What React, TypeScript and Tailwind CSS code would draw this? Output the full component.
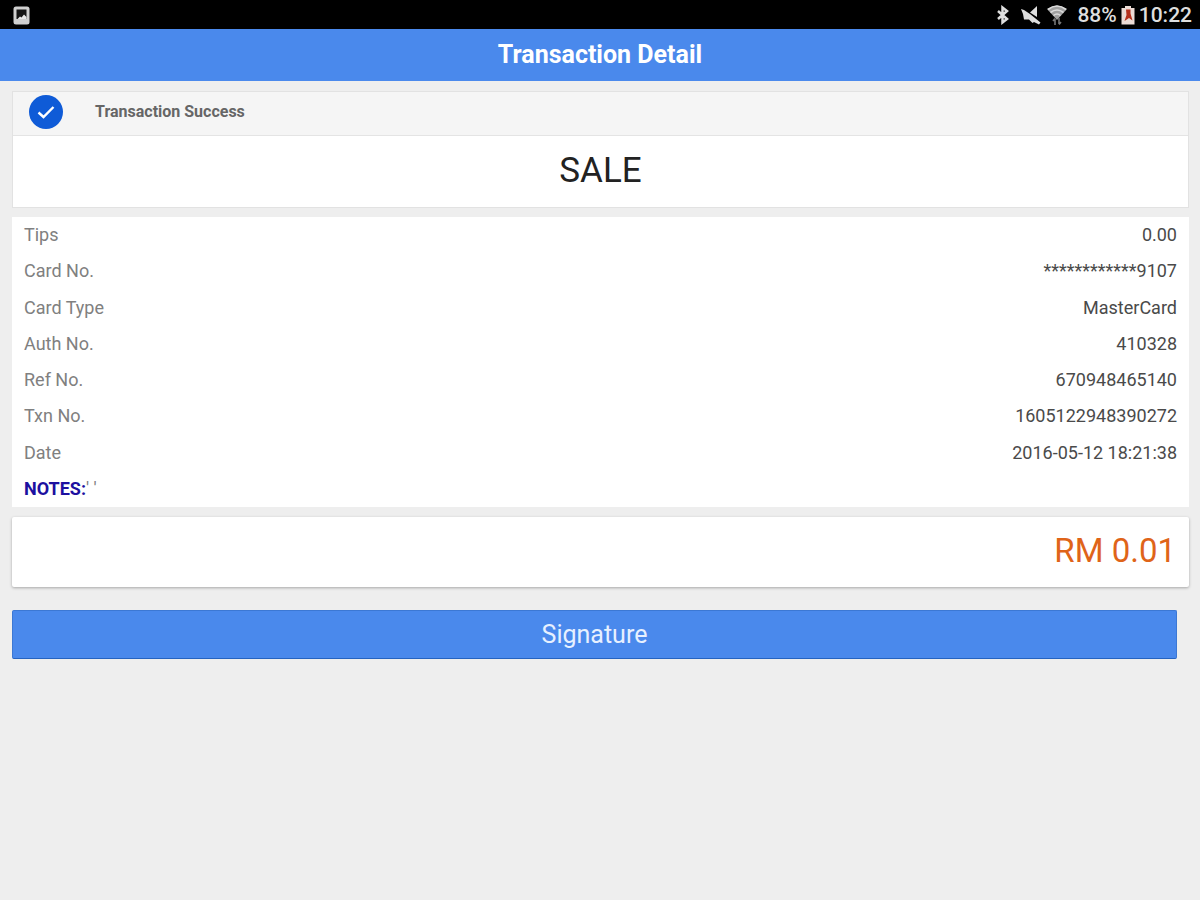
import React from "react";

const details = [
  { label: "Tips", value: "0.00" },
  { label: "Card No.", value: "************9107" },
  { label: "Card Type", value: "MasterCard" },
  { label: "Auth No.", value: "410328" },
  { label: "Ref No.", value: "670948465140" },
  { label: "Txn No.", value: "1605122948390272" },
  { label: "Date", value: "2016-05-12 18:21:38" },
];

const PictureIcon = () => (
  <svg className="w-[18px] h-5" viewBox="0 0 18 20" aria-hidden="true">
    <rect x="0.500" y="1.500" width="16" height="18" rx="2.500" fill="#cfcfcf" />
    <rect x="3.500" y="4.500" width="10" height="9.500" fill="#141414" />
    <path d="M4.500 14l2.500-2.500 1.500 1L11 9.500l2.500 2.500v2z" fill="#e8e8e8" />
  </svg>
);

const BluetoothIcon = () => (
  <svg className="w-4 h-5" viewBox="0 0 16 20" aria-hidden="true">
    <path
      d="M1 6l9 8-4.500 3.500v-15L10 6l-9 8"
      fill="none"
      stroke="#dedede"
      strokeWidth="2.500"
    />
  </svg>
);

const MuteIcon = () => (
  <svg className="w-5 h-5" viewBox="0 0 20 20" aria-hidden="true">
    <path d="M0 4l3 1 6 4 10.500 8.500-1.500 2-5-2.500-1.500 1L8 14.500H3L2 9z" fill="#dedede" />
    <path d="M9 7.500l7-6.500v11z" fill="#dedede" />
  </svg>
);

const WifiIcon = () => (
  <svg className="w-5 h-6" viewBox="0 0 20 24" aria-hidden="true">
    <path d="M0 6Q10-1 20 6L10 17z" fill="#a0a0a0" />
    <path
      d="M1 6.500Q10-.5 19 6.500M3.500 9.500q6.500-5 13 0M6.500 12.500q3.500-3 7 0"
      fill="none"
      stroke="#dadada"
      strokeWidth="1.600"
    />
    <path
      d="M8 22v-6M6 18l2-2.500M12 15v6M14 19l-2 2.500"
      fill="none"
      stroke="#777"
      strokeWidth="1.600"
    />
  </svg>
);

const BatteryIcon = () => (
  <svg className="w-4 h-5" viewBox="0 0 16 20" aria-hidden="true">
    <path d="M5 1h6v2h3.500v16.500h-13V3H5z" fill="#ecdcd6" />
    <path d="M6 4.500h4.500v4l2 7-3.500-2.500-4.500 3 2-6z" fill="#b5301c" />
  </svg>
);

const CheckIcon = () => (
  <svg className="w-[34px] h-[34px]" viewBox="0 0 34 34" aria-hidden="true">
    <circle cx="17" cy="17" r="17" fill="#0f5bd7" />
    <path
      d="M9.500 17.500l5 4.500 10-10"
      fill="none"
      stroke="#fff"
      strokeWidth="2.400"
    />
  </svg>
);

const StatusBar = () => (
  <div className="flex items-center justify-between h-[29px] pl-[13px] pr-2 bg-black text-[#dedede]">
    <PictureIcon />
    <div className="flex items-center text-[21px] leading-6 font-medium">
      <BluetoothIcon />
      <span className="flex ml-2 mr-[6px]">
        <MuteIcon />
      </span>
      <WifiIcon />
      <span className="ml-[10px] mr-[3px]">88%</span>
      <BatteryIcon />
      <span className="ml-[3px]">10:22</span>
    </div>
  </div>
);

const DetailTable = () => (
  <table className="w-full h-[290px] mt-[9px] bg-white text-lg leading-6">
    <tbody>
      {details.map(({ label, value }) => (
        <tr key={label}>
          <th scope="row" className="pl-3 font-normal text-left text-[#808080]">
            {label}
          </th>
          <td className="pr-3 text-right text-[#4a4a4a]">{value}</td>
        </tr>
      ))}
      <tr>
        <th scope="row" className="pl-3 font-normal text-left text-[#808080]">
          <span className="font-bold text-[#1d10a0]">NOTES:</span>' '
        </th>
        <td />
      </tr>
    </tbody>
  </table>
);

const App: React.FC = () => {
  return (
    <div className="min-h-screen bg-[#eeeeee] font-[Roboto,sans-serif]">
      <StatusBar />
      <header className="flex items-center justify-center h-[52px] bg-[#4a89ec]">
        <h1 className="text-[25px] leading-8 font-bold text-white">
          Transaction Detail
        </h1>
      </header>

      <main className="pt-[10px] pl-3 pr-[11px]">
        <section className="bg-white border border-[#e2e2e2]">
          <div className="flex items-center h-11 pl-4 pb-1 bg-[#f5f5f5] border-b border-[#e4e4e4]">
            <CheckIcon />
            <p className="ml-8 text-base font-bold text-[#666666]">
              Transaction Success
            </p>
          </div>
          <p className="pt-[15px] pb-4 text-center text-[35px] leading-10 text-[#222222]">
            SALE
          </p>
        </section>

        <DetailTable />

        <section className="mt-[10px] pr-[13px] pt-[14px] pb-4 bg-white rounded-xs shadow-[0_1px_3px_rgba(0,0,0,0.3)] text-right text-[33px] leading-10 text-[#df6419]">
          RM 0.01
        </section>

        <div className="pt-[23px] pr-3">
          <button
            type="button"
            className="w-full h-[49px] bg-[#4a89ec] border border-[#3c78d4] border-b-[#2563c0] rounded-xs text-[25px] leading-8 text-[#e6f0ff]"
          >
            Signature
          </button>
        </div>
      </main>
    </div>
  );
};

export default App;
